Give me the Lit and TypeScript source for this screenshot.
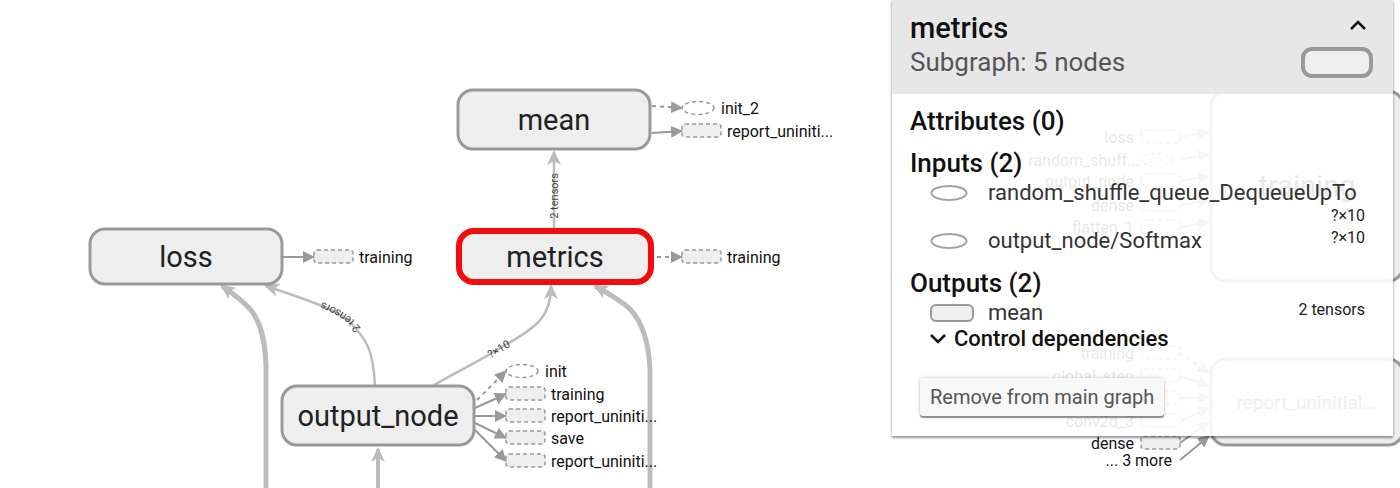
import { LitElement, html, svg, css } from "lit";
import { customElement } from "lit/decorators.js";
import { classMap } from "lit/directives/class-map.js";

interface OpNode { name: string; x: number; y: number; w: number; h: number; selected?: boolean; small?: boolean }
interface Edge { id: string; d: string; size: "thin" | "mid" | "thick"; label?: string; at?: string }
interface Annotation {
  name: string; x: number; y: number;
  from: [number, number]; to: [number, number];
  shape: "box" | "ellipse" | "none"; side: "in" | "out"; control?: boolean;
}

const NODES: OpNode[] = [
  { name: "mean", x: 458, y: 90, w: 192, h: 59 },
  { name: "metrics", x: 459, y: 231, w: 192, h: 51, selected: true },
  { name: "loss", x: 90, y: 229, w: 192, h: 55 },
  { name: "output_node", x: 282, y: 386, w: 192, h: 59 },
  { name: "training", x: 1211, y: 91, w: 192, h: 190 },
  { name: "report_uninitial...", x: 1211, y: 359, w: 192, h: 86, small: true },
];

const EDGES: Edge[] = [
  { id: "e1", d: "M554,229 L554,152", size: "thin", label: "2 tensors", at: "43%" },
  { id: "e2", d: "M375,385 C373,350 367,340 350,322 C333,308 310,301 266,286", size: "thin", label: "2 tensors", at: "50%" },
  { id: "e3", d: "M434,385 C460,370 480,361 505,345 C540,326 551,314 551,286", size: "thin", label: "?×10", at: "46%" },
  { id: "e4", d: "M266,500 L266,365 C265,340 261,322 250,309 C241,299 232,293 222,286", size: "thick" },
  { id: "e5", d: "M650,500 L650,370 C649,343 643,323 630,309 C619,299 608,293 595,286", size: "thick" },
  { id: "e6", d: "M378,500 L378,449", size: "mid" },
];

const out = (name: string, x: number, y: number, from: [number, number], extra: Partial<Annotation> = {}): Annotation =>
  ({ name, x, y, from, to: [x, y], shape: "box", side: "out", ...extra });
const into = (name: string, y: number, toY: number, extra: Partial<Annotation> = {}): Annotation =>
  ({ name, x: 1141, y, from: [1180, y], to: [1209, toY], shape: "box", side: "in", ...extra });

const ANNOTATIONS: Annotation[] = [
  out("init_2", 682, 108, [652, 106], { shape: "ellipse", control: true }),
  out("report_uniniti...", 682, 131, [652, 133]),
  out("training", 682, 257, [657, 257], { control: true }),
  out("training", 314, 257, [283, 257]),
  out("init", 506, 371, [477, 400], { shape: "ellipse", control: true }),
  out("training", 506, 394, [475, 408]),
  out("report_uniniti...", 506, 416, [475, 416]),
  out("save", 506, 438, [475, 423]),
  out("report_uniniti...", 506, 461, [475, 430]),
  into("loss", 137, 132),
  into("random_shuff...", 160, 154, { shape: "ellipse" }),
  into("output_node", 181, 176),
  into("dense", 205, 200),
  into("flatten_1", 227, 222),
  into("training", 353, 373, { control: true }),
  into("global_step", 376, 386),
  into("", 398, 397),
  into("conv2d_3", 421, 408),
  into("dense", 443, 422),
  into("... 3 more", 460, 436, { shape: "none" }),
];

@customElement("graph-canvas")
export class GraphCanvas extends LitElement {
  static styles = css`
    :host { display: block; }
    .canvas { display: block; width: 100%; height: 100%; }
    text { font-family: Roboto, sans-serif; fill: #111; }
    .node { fill: #eee; stroke: #999; stroke-width: 3px; }
    .node.selected { stroke: #f20d0d; stroke-width: 6px; }
    .name { font-size: 29px; text-anchor: middle; fill: #212121; }
    .name.small { font-size: 19px; fill: #555; }
    .edge { fill: none; stroke: #bfbbbb; }
    .thin { stroke-width: 2.5px; }
    .mid { stroke-width: 4px; }
    .thick { stroke-width: 5px; }
    .head { fill: #bfbbbb; }
    .edge-label { font-size: 11px; text-anchor: middle; fill: #444; }
    .link { fill: none; stroke: #999; stroke-width: 2px; }
    .link.control { stroke-dasharray: 4 4; }
    .link-head { fill: #999; }
    .stub { fill: #eee; stroke: #999; stroke-width: 1.5px; stroke-dasharray: 4 3; }
    .stub.ellipse { fill: #fff; }
    .stub-name { font-size: 16px; }
    .stub-name.in { text-anchor: end; }
  `;

  private edge(e: Edge) {
    return svg`
      <path id=${e.id} class="edge ${e.size}" d=${e.d} marker-end="url(#arrow)"></path>
      ${e.label ? svg`<text class="edge-label" dy="4"><textPath href="#${e.id}" startOffset=${e.at!}>${e.label}</textPath></text>` : ""}`;
  }

  private node(n: OpNode) {
    return svg`
      <rect class=${classMap({ node: true, selected: !!n.selected })} x=${n.x} y=${n.y} width=${n.w} height=${n.h} rx="15"></rect>
      <text class=${classMap({ name: true, small: !!n.small })} x=${n.x + n.w / 2} y=${n.y + n.h / 2 + (n.small ? 7 : 10)}>${n.name}</text>`;
  }

  private annotation(a: Annotation) {
    const shape = a.shape === "box"
      ? svg`<rect class="stub" x=${a.x} y=${a.y - 7} width="39" height="13" rx="3"></rect>`
      : a.shape === "ellipse"
        ? svg`<ellipse class="stub ellipse" cx=${a.x + 16} cy=${a.y} rx="16" ry="6.5"></ellipse>`
        : "";
    const labelX = a.side === "out"
      ? a.x + (a.shape === "ellipse" ? 39 : 45)
      : a.x + (a.shape === "none" ? 31 : a.shape === "ellipse" ? -1 : -7);
    return svg`
      ${shape}
      <path class=${classMap({ link: true, control: !!a.control })} d="M${a.from[0]},${a.from[1]} L${a.to[0]},${a.to[1]}" marker-end="url(#tip)"></path>
      ${a.name ? svg`<text class="stub-name ${a.side}" x=${labelX} y=${a.y + 6}>${a.name}</text>` : ""}`;
  }

  render() {
    return html`
      <svg class="canvas" role="img" aria-label="Computation graph">
        <defs>
          <marker id="arrow" markerUnits="userSpaceOnUse" markerWidth="16" markerHeight="16" viewBox="0 0 16 16" refX="13" refY="8" orient="auto">
            <path class="head" d="M0,1 L15,8 L0,15 L4,8 Z"></path>
          </marker>
          <marker id="tip" markerUnits="userSpaceOnUse" markerWidth="12" markerHeight="12" viewBox="0 0 12 12" refX="11" refY="6" orient="auto">
            <path class="link-head" d="M0,0 L12,6 L0,12 Z"></path>
          </marker>
        </defs>
        ${EDGES.map((e) => this.edge(e))}
        ${NODES.map((n) => this.node(n))}
        ${ANNOTATIONS.map((a) => this.annotation(a))}
      </svg>`;
  }
}

@customElement("node-info")
export class NodeInfo extends LitElement {
  static styles = css`
    :host {
      display: block;
      background: rgba(255, 255, 255, 0.9);
      box-shadow: 0 2px 2px rgba(0, 0, 0, 0.35), 0 0 4px rgba(0, 0, 0, 0.2);
      color: #111;
      font-family: Roboto, sans-serif;
    }
    button { font: inherit; color: inherit; background: none; border: 0; padding: 0; cursor: pointer; }
    svg { display: block; }
    .header {
      display: flex; justify-content: space-between; align-items: flex-start;
      background: #e7e7e7; padding: 10px 20px 15px 18px;
    }
    h2, h3, p, ul { margin: 0; padding: 0; }
    h2 { font-size: 29px; line-height: 36px; font-weight: 500; }
    .kind { font-size: 26px; line-height: 32px; color: #555; }
    .controls { display: flex; flex-direction: column; align-items: flex-end; gap: 14px; padding-top: 8px; }
    .toggle { margin-right: 6px; }
    .body { padding: 12px 28px 20px 18px; }
    h3 { font-size: 26px; line-height: 30px; font-weight: 500; }
    .inputs { margin-top: 12px; }
    .outputs { margin-top: 14px; }
    ul { list-style: none; margin-top: 2px; padding-left: 20px; display: flex; flex-direction: column; gap: 2px; }
    li { display: flex; flex-wrap: wrap; align-items: flex-start; }
    .item { display: flex; align-items: center; }
    .glyph { width: 58px; }
    .item-name { font-size: 22px; line-height: 26px; color: #333; white-space: nowrap; }
    .shape { margin-left: auto; font-size: 16px; line-height: 20px; color: #222; }
    .control { display: flex; align-items: center; gap: 8px; margin-left: 20px; font-size: 22px; line-height: 26px; font-weight: 500; }
    .remove {
      margin: 26px 0 0 10px; padding: 0 10px; height: 38px;
      font-size: 20px; color: #555; background: #f8f8f8; border-radius: 3px;
      box-shadow: 0 2px 1px rgba(0, 0, 0, 0.4), 0 0 4px rgba(0, 0, 0, 0.2);
    }
    .op { fill: #fff; stroke: #a5a5a5; stroke-width: 2px; }
    .group { fill: #eee; stroke: #999; stroke-width: 2px; }
    .group.big { stroke-width: 4px; }
    .chevron { fill: none; stroke: #111; stroke-width: 2.5px; }
  `;

  private opGlyph = () => html`<svg width="38" height="18"><ellipse class="op" cx="19" cy="9" rx="17.5" ry="7"></ellipse></svg>`;

  render() {
    return html`
      <header class="header">
        <div>
          <h2>metrics</h2>
          <p class="kind">Subgraph: 5 nodes</p>
        </div>
        <div class="controls">
          <button class="toggle" aria-label="Collapse details">
            <svg width="18" height="15"><path class="chevron" d="M2,11 L9,4 L16,11"></path></svg>
          </button>
          <svg width="72" height="32"><rect class="group big" x="2" y="2" width="68" height="27" rx="9"></rect></svg>
        </div>
      </header>
      <section class="body">
        <h3>Attributes (0)</h3>
        <h3 class="inputs">Inputs (2)</h3>
        <ul>
          ${["random_shuffle_queue_DequeueUpTo", "output_node/Softmax"].map((name) => html`
            <li>
              <span class="item"><span class="glyph">${this.opGlyph()}</span><span class="item-name">${name}</span></span>
              <span class="shape">?×10</span>
            </li>`)}
        </ul>
        <h3 class="outputs">Outputs (2)</h3>
        <ul>
          <li>
            <span class="item">
              <span class="glyph"><svg width="44" height="20"><rect class="group" x="1" y="2" width="42" height="16" rx="5"></rect></svg></span>
              <span class="item-name">mean</span>
            </span>
            <span class="shape">2 tensors</span>
          </li>
        </ul>
        <button class="control" aria-expanded="false">
          <svg width="16" height="12"><path class="chevron" d="M1,2 L8,9 L15,2"></path></svg>
          Control dependencies
        </button>
        <button class="remove">Remove from main graph</button>
      </section>`;
  }
}

@customElement("app-root")
export class AppRoot extends LitElement {
  static styles = css`
    :host { display: block; position: relative; height: 100vh; overflow: hidden; background: #fff; }
    .graph { height: 100%; }
    .info { position: absolute; top: 0; right: 7px; width: 501px; max-width: 100%; }
  `;
  render() {
    return html`<graph-canvas class="graph"></graph-canvas><node-info class="info"></node-info>`;
  }
}
